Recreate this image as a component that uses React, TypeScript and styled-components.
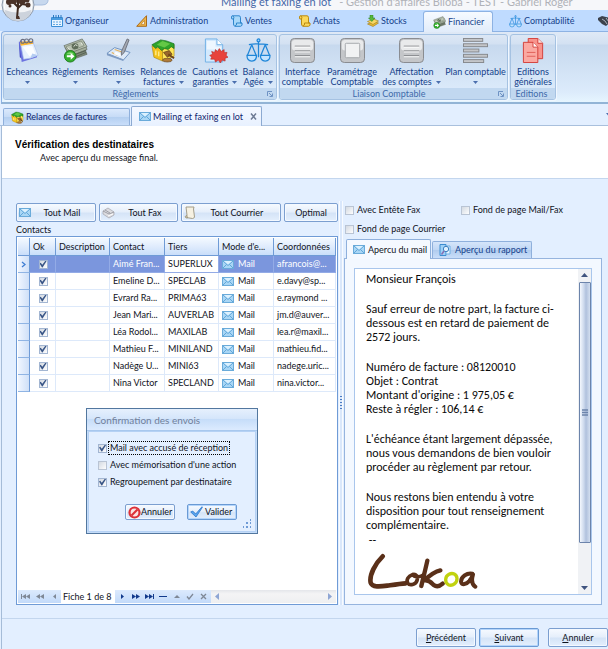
import React, { useState } from 'react';
import styled, { createGlobalStyle, css } from 'styled-components';

const ui = "Lato, 'Noto Sans', sans-serif";
const ink = '#10131c';
const navy = '#15428b';
const sky = '#e3efff';
const edge = '#7c9fd0';

const Global = createGlobalStyle`
  *, *::before, *::after { box-sizing: border-box; }
  body { margin: 0; background: ${sky}; font: 9px/12px ${ui}; color: ${ink}; }
  button, input { font: inherit; color: inherit; margin: 0; padding: 0; }
  svg { display: block; flex: none; }
`;

const Page = styled.div`
  display: flex;
  flex-direction: column;
  min-height: 100vh;
  overflow: hidden;
`;

/* ---------- Window title and module tabs ---------- */

const TitleBar = styled.header`
  position: relative;
  display: flex;
  align-items: flex-end;
  gap: 8px;
  height: 10px;
  padding: 0 0 1px 221px;
  background: #f6f7fa;
  font-size: 11px;
  line-height: 14px;
  color: #b0b2b8;
  white-space: nowrap;
  b { font-weight: 400; color: #4668a8; }
`;
const Orb = styled.button`
  position: absolute;
  left: 0;
  top: -12px;
  z-index: 2;
  border: 0;
  background: none;
`;
const ModuleTabs = styled.nav`
  display: flex;
  align-items: stretch;
  height: 21px;
  padding-left: 51px;
  background: #bfdbff;
`;
const ModuleTab = styled.button<{ $w: number; $on?: boolean; $pad?: number }>`
  display: flex;
  align-items: center;
  gap: 2px;
  flex: none;
  width: ${p => p.$w}px;
  padding: 1px 0 0 ${p => p.$pad ?? 0}px;
  border: 0;
  background: none;
  color: ${navy};
  ${p => p.$on && css`
    margin: 1px 0 -1px;
    padding-top: 0;
    border: 1px solid #8db2e3;
    border-bottom: 0;
    border-radius: 3px 3px 0 0;
    background: linear-gradient(#f6faff, #e1ecfa);
    z-index: 1;
  `}
`;

/* ---------- Ribbon ---------- */

const Ribbon = styled.section`
  display: flex;
  gap: 2px;
  height: 73px;
  margin-left: 1px;
  padding: 2px 1px;
  border: 1px solid #8db2e3;
  border-right: 0;
  border-bottom: 2px solid #92b4d6;
  border-radius: 4px 0 0 0;
  background: linear-gradient(#dfe9f6 0, #d3e1f2 12px, #c7d9ee 13px, #dcebfb 60px, #e6f5ff);
`;
const Group = styled.div`
  display: flex;
  flex-direction: column;
  border: 1px solid #a5c2e2;
  border-radius: 3px;
  overflow: hidden;
  box-shadow: 1px 1px 0 #f0f7ff;
`;
const Tools = styled.div`
  display: flex;
  flex: 1;
`;
const GroupCaption = styled.div`
  display: flex;
  align-items: center;
  height: 11px;
  padding: 1px 3px 0 0;
  background: #c1d8f0;
  color: #3e6aaa;
  line-height: 10px;
  span { flex: 1; text-align: center; }
`;
const Tool = styled.button<{ $w: number }>`
  display: flex;
  flex-direction: column;
  align-items: center;
  width: ${p => p.$w}px;
  padding: 2px 0 0;
  border: 0;
  background: none;
  color: ${navy};
  line-height: 10px;
  white-space: nowrap;
  svg.pic {
    width: 25px;
    height: 25px;
    margin: 1px 0 4px;
  }
`;
const ToolLine = styled.span`
  display: flex;
  align-items: center;
  justify-content: center;
  gap: 4px;
  min-height: 10px;
`;

/* ---------- Document tabs ---------- */

const DocTabs = styled.nav`
  display: flex;
  align-items: flex-end;
  gap: 1px;
  height: 22px;
  padding-left: 3px;
  border-bottom: 1px solid #a9c0dd;
`;
const DocTab = styled.div<{ $w: number; $on?: boolean }>`
  display: flex;
  align-items: center;
  width: ${p => p.$w}px;
  height: ${p => (p.$on ? 20 : 17)}px;
  margin-bottom: ${p => (p.$on ? -1 : 0)}px;
  padding: 0 4px 0 7px;
  border: 1px solid ${p => (p.$on ? '#8caad2' : '#8fb0dc')};
  border-bottom: 0;
  border-radius: 2px 2px 0 0;
  background: ${p => (p.$on ? 'linear-gradient(#f4f8ff, #e8f1ff)' : 'linear-gradient(#dbe9fc, #c6dbf6 50%, #b4cff0 51%, #c9defa)')};
  color: #10246e;
`;
const TabButton = styled.button`
  display: flex;
  align-items: center;
  flex: 1;
  gap: 2px;
  border: 0;
  background: none;
  white-space: nowrap;
`;
const PlainButton = styled.button`
  display: flex;
  border: 0;
  background: none;
`;
const MoreTabs = styled(PlainButton)`
  margin: 0 -3px 9px auto;
`;

/* ---------- Wizard page ---------- */

const Wizard = styled.main`
  display: flex;
  flex: 1;
  flex-direction: column;
  margin-left: 1px;
  border-left: 1px solid #a5bcd8;
`;
const Heading = styled.div`
  height: 53px;
  padding: 13px 13px 0;
  border-bottom: 1px solid #c3d6ee;
  background: #fff;
  h1 {
    margin: 0;
    font: bold 10px/12px 'Liberation Sans', sans-serif;
    color: #000;
  }
  p { margin: 1px 0 0 25px; }
`;
const Columns = styled.div`
  display: flex;
  flex: 1;
  padding: 22px 6px 13px 14px;
`;
const Left = styled.section`
  display: flex;
  flex-direction: column;
  flex: 322 1 0;
  min-width: 0;
  padding-top: 2px;
`;
const ButtonRow = styled.div`
  display: flex;
  gap: 3px;
`;
const Push = styled.button<{ $grow?: number; $w?: number; $h?: number; $hot?: boolean }>`
  display: flex;
  align-items: center;
  ${p => (p.$grow ? `flex: ${p.$grow} 1 0;` : `width: ${p.$w}px;`)}
  height: ${p => p.$h ?? 19}px;
  padding: 0 2px;
  border: 1px solid ${p => (p.$hot ? '#6a9ad4' : edge)};
  border-radius: 2px;
  background: linear-gradient(#f6faff, #e6effb 45%, #d5e4f7 55%, #e4effd);
  box-shadow: inset 0 0 0 1px ${p => (p.$hot ? '#b4d5fb' : '#f4f9ff')};
  white-space: nowrap;
  span { flex: 1; text-align: center; }
`;
const Caption = styled.div`
  height: 14px;
  line-height: 15px;
`;
const GridBox = styled.div`
  position: relative;
  display: flex;
  flex: 1;
  flex-direction: column;
  padding: 1px;
  border: 1px solid #6f9bd6;
  background: #fff;
`;
const Grid = styled.table`
  width: 100%;
  table-layout: fixed;
  border-collapse: separate;
  border-spacing: 0;
  th, td {
    height: 17px;
    padding: 0 2px 0 3px;
    font-weight: 400;
    text-align: left;
    white-space: nowrap;
    overflow: hidden;
    text-overflow: ellipsis;
  }
  thead th {
    height: 18px;
    border-right: 1px solid #6f9bd6;
    border-bottom: 1px solid #6f9bd6;
    background: linear-gradient(#f4f9ff, #dbe9fc 60%, #c9defa);
  }
  tbody th {
    padding: 0 2px;
    border-right: 1px solid #6f9bd6;
    border-bottom: 1px solid #8fb4e4;
    background: linear-gradient(90deg, #f0f6ff, #cfe0f8);
  }
  td {
    border-right: 1px solid #dde9fa;
    border-bottom: 1px solid #dde9fa;
  }
`;
const Row = styled.tr<{ $on: boolean }>`
  ${p => p.$on && css`
    td { background: #7b96dd; color: #fff; border-color: #93abe6; }
    td:nth-of-type(4) { background: #fff; color: ${ink}; }
  `}
`;
const Mode = styled.span`
  display: flex;
  align-items: center;
  gap: 4px;
`;
const Tick = styled.input`
  appearance: none;
  display: grid;
  place-items: center;
  flex: none;
  width: 9px;
  height: 9px;
  border: 1px solid #b9c4d4;
  background: linear-gradient(135deg, #d4dae2, #fdfdfe);
  &:checked { border-color: #a3b6d2; }
  &:checked::before {
    content: '';
    width: 7px;
    height: 7px;
    background: #3a5687;
    clip-path: polygon(0 42%, 18% 32%, 40% 60%, 86% 0, 100% 10%, 44% 100%, 36% 100%);
  }
`;
const CellTick = styled(Tick)`
  margin: 0 auto;
`;
const Choice = styled.label<{ $focus?: boolean }>`
  display: flex;
  align-items: center;
  gap: 2px;
  white-space: nowrap;
  span {
    padding: 0 1px;
    outline: ${p => (p.$focus ? '1px dotted #000' : 'none')};
  }
`;
const Navigator = styled.div`
  display: flex;
  align-items: stretch;
  height: 13px;
  margin-top: auto;
`;
const NavGroup = styled.div`
  display: flex;
  padding: 0 1px;
  background: linear-gradient(#dceafd, #c2dafa);
`;
const NavButton = styled.button<{ $w: number }>`
  display: flex;
  align-items: center;
  justify-content: center;
  width: ${p => p.$w}px;
  border: 0;
  background: none;
`;
const NavLabel = styled.span`
  padding: 0 2px;
  line-height: 14px;
  width: 54px;
  white-space: nowrap;
`;
const HScroll = styled.div`
  display: flex;
  flex: 1;
  align-items: center;
  justify-content: space-between;
  padding: 0 4px;
  background: linear-gradient(#e4e6ea, #f4f4f5 30%, #eeeff1);
`;

/* ---------- Confirmation dialog, floating over the grid ---------- */

const Dialog = styled.section`
  position: absolute;
  left: 69px;
  top: 171px;
  width: 172px;
  border: 1px solid #52779f;
  background: #c4dcf9;
  h2 {
    margin: 0;
    padding-left: 7px;
    height: 22px;
    font: 10px/23px ${ui};
    color: #71809a;
    background: linear-gradient(#e6f0fd, #d5e6fb 45%, #c6ddf9 50%, #dcebfe);
    border-bottom: 1px solid #a8c8ee;
  }
`;
const DialogBody = styled.div`
  display: flex;
  flex-direction: column;
  gap: 5px;
  margin: 0 1px 1px;
  padding: 10px 3px 3px 9px;
  border: 1px solid #b5d1f4;
  background: ${sky};
`;
const DialogActions = styled.div`
  display: flex;
  align-items: flex-start;
  gap: 12px;
  margin-top: 11px;
  padding-left: 27px;
  height: 24px;
  > svg { align-self: flex-end; margin-left: -6px; }
`;

/* ---------- Splitter and preview ---------- */

const Splitter = styled.div`
  display: flex;
  align-items: center;
  justify-content: center;
  width: 4px;
  margin: 0 1px;
  border-left: 1px solid #f8fbff;
  border-right: 1px solid #f8fbff;
  background: #d9e7fb;
`;
const Right = styled.section`
  display: flex;
  flex-direction: column;
  flex: 258 1 0;
  min-width: 0;
`;
const Options = styled.div`
  display: grid;
  grid-template-columns: 116px 1fr;
  row-gap: 7px;
  padding: 3px 0 3px 1px;
`;
const PreviewTabs = styled.div`
  display: flex;
  align-items: flex-end;
  gap: 1px;
  height: 20px;
  padding-left: 2px;
`;
const PreviewTab = styled.button<{ $on?: boolean; $w: number }>`
  display: flex;
  align-items: center;
  gap: 3px;
  width: ${p => p.$w}px;
  height: ${p => (p.$on ? 20 : 17)}px;
  margin-bottom: ${p => (p.$on ? -1 : 0)}px;
  padding: 0 6px;
  border: 1px solid #8fb0dc;
  border-bottom: 0;
  border-radius: 2px 2px 0 0;
  background: ${p => (p.$on ? '#f5f9ff' : 'linear-gradient(#d5e5fa, #bfd6f4 50%, #b1ccee 51%, #c9defa)')};
  color: ${p => (p.$on ? ink : navy)};
  white-space: nowrap;
  z-index: ${p => (p.$on ? 1 : 0)};
`;
const Preview = styled.div`
  display: flex;
  flex: 1;
  padding: 9px;
  border: 1px solid #96b4de;
  background: #f3f8ff;
`;
const Letter = styled.article`
  display: flex;
  flex: 1;
  min-width: 0;
  border: 1px solid #a9c6ec;
  background: #fff;
`;
const LetterText = styled.div`
  flex: 1;
  padding: 3px 0 0 11px;
  font: 12px/14px Carlito, Calibri, Lato, sans-serif;
  color: #0a0a0a;
  white-space: nowrap;
  p { margin: 0 0 16px; }
  p:last-of-type { margin-bottom: 1px; }
  svg { margin: 5px 0 0 2px; }
`;
const VScroll = styled.div`
  display: flex;
  flex-direction: column;
  align-items: center;
  width: 13px;
  background: #f0f2f5;
`;
const ScrollButton = styled.button`
  display: flex;
  align-items: center;
  justify-content: center;
  width: 13px;
  height: 13px;
  border: 0;
  background: none;
`;
const Thumb = styled.div`
  display: flex;
  align-items: center;
  justify-content: center;
  width: 12px;
  flex: 1;
  margin-bottom: 38px;
  border: 1px solid #6c84ab;
  border-radius: 1px;
  background: linear-gradient(90deg, #f4f8fe, #cbd8ec 40%, #b0c1dd 60%, #d3dff0);
`;
const Footer = styled.footer`
  display: flex;
  justify-content: flex-end;
  gap: 3px;
  padding: 9px 0 2px;
  border-top: 1px solid #c3d6ee;
  ${Push}:last-child { margin-left: 6px; }
`;

/* ---------- Icons ---------- */

const Down = () => (
  <svg width="5" height="3" viewBox="0 0 5 3"><path d="M0 0h5L2.500 3z" fill="#4b6fae" /></svg>
);
const Envelope = () => (
  <svg width="12" height="9" viewBox="0 0 12 9">
    <rect x=".5" y=".5" width="11" height="8" fill="#a9d6f5" stroke="#6aabda" />
    <path d="M1 1l5 4.500L11 1M1 8l3.500-3.500M11 8L7.500 4.500" fill="none" stroke="#4f9bd2" strokeWidth=".8" />
    <path d="M2 1h8L6 4.500z" fill="#dcf1fe" />
  </svg>
);
const TreeOrb = () => (
  <svg width="50" height="36" viewBox="0 0 50 36">
    <path d="M28 17h14q7 0 6-7V0H28z" fill="#c7d8ee" stroke="#a8bfdf" />
    <circle cx="18" cy="17" r="16" fill="#dfe3e8" stroke="#8e9aab" />
    <circle cx="18" cy="17" r="14" fill="#f3f4f6" stroke="#fff" />
    <path d="M5 22a13 11 0 0 0 26 0q-13 5-26 0" fill="#cdd3dc" />
    <path d="M17 30l1-11-4-4-6-1M18 20l4-4 6 1M18 21v-9" fill="none" stroke="#3f2a20" strokeWidth="2" />
    <g fill="#4a3228"><circle cx="9" cy="14" r="3" /><circle cx="14" cy="13" r="3" /><circle cx="22" cy="13" r="3.500" /><circle cx="28" cy="17" r="2.500" /><circle cx="27" cy="12" r="2.500" /><circle cx="10" cy="18" r="1.500" /><path d="M16 31l1-3h2l1 3z" /></g>
  </svg>
);
const Calendar = () => (
  <svg width="12" height="12" viewBox="0 0 12 12">
    <path d="M.5 2.500h11v9H.5z" fill="#e8f4ff" stroke="#3c8fd6" />
    <path d="M1 3h10v2H1z" fill="#4a9ce0" />
    <path d="M2.500 0v3M5 0v3M7.500 0v3M10 0v3" stroke="#2a78c0" />
    <path d="M2 7h8M2 9.500h8" stroke="#62a8e4" strokeDasharray="2 1" />
  </svg>
);
const SetSquare = () => (
  <svg width="12" height="12" viewBox="0 0 12 12">
    <path d="M.7 11.300L10.500.7v10.600z" fill="#efb544" stroke="#a8691b" />
    <path d="M5 9.300l3.500-3.800v3.800z" fill="#fff" stroke="#b87a24" strokeWidth=".7" />
  </svg>
);
const Scroll = ({ a, b }: { a: string; b: string }) => (
  <svg width="12" height="12" viewBox="0 0 12 12">
    <path d="M1 .8h7q1.500 0 1.500 2V8H11q.8 3-1.500 3.300H4Q2.500 11 2.500 9V4H.8Q0 1.500 1 .8z" fill={a} stroke={b} />
    <path d="M4 11q2-.5 1.500-3H11M2.500 4q1-2-.5-3" fill="none" stroke={b} />
  </svg>
);
const Layers = () => (
  <svg width="12" height="12" viewBox="0 0 12 12">
    <path d="M.5 9l6-2.500L11.500 8l-5.500 3.500z" fill="#e9b932" stroke="#a07b14" strokeWidth=".6" />
    <path d="M.5 6.500l6-2.500 5 2L6 9.500z" fill="#f6d765" stroke="#a07b14" strokeWidth=".6" />
    <path d="M3 0h3v3h2L4.800 6.500 1.500 3H3z" fill="#55b83c" stroke="#2a7d1d" strokeWidth=".5" />
  </svg>
);
const Cash = ({ size }: { size: number }) => (
  <svg className="pic" width={size} height={size} viewBox="0 0 26 26">
    <g stroke="#5c6659" strokeWidth=".7">
      <path d="M4 14l18-4 3 7-17 6z" fill="#7b8776" />
      <path d="M2 10l20-6 3 8-18 7z" fill="#a3ae9c" />
      <path d="M1 8L20 1l5 8-19 7z" fill="#b9c2b2" />
    </g>
    <path d="M3 9l16-6 3 5-15 6z" fill="none" stroke="#7c8876" strokeWidth=".8" />
    <ellipse cx="12.500" cy="8.500" rx="3.500" ry="3" fill="#5f6d5a" />
    <path d="M11 9l2-2 2 1M5 10l2 2M19 5l1 2" fill="none" stroke="#e9eee5" />
    <path d="M10 18l14-5M12 20l12-5" stroke="#4d574a" strokeWidth=".8" />
    <circle cx="7.500" cy="19" r="6" fill="#35b02f" stroke="#1c7c1a" />
    <path d="M3.500 17a4.500 4 0 0 1 8 0z" fill="#84d873" />
    <path d="M4 18h4v-2.500l4 3.500-4 3.500V20H4z" fill="#fff" />
  </svg>
);
const Scales = ({ size }: { size: number }) => (
  <svg className="pic" width={size} height={size} viewBox="0 0 26 26" fill="none" stroke="#1f86d8" strokeWidth="1.300">
    <circle cx="13" cy="2.500" r="1.500" fill="#9fd2ff" />
    <path d="M13 4v16M3 7q10-2 20 0M6 7L1.500 18M6 7l4.500 11M20 7l-4.500 11M20 7l4.500 11" />
    <path d="M1 18h10q0 6-5 6t-5-6zM15 18h10q0 6-5 6t-5-6z" fill="#c4e4ff" />
  </svg>
);
const Handshake = () => (
  <svg width="14" height="10" viewBox="0 0 14 10"><path d="M0 2l4-2 4 1 5 1 1 3-6 5-4-2-4-4z" fill="#3c424c" /><path d="M4 3l3 2 2 3M8 2l3 4" stroke="#aab2bd" fill="none" /></svg>
);
const NotePad = () => (
  <svg className="pic" width="26" height="26" viewBox="0 0 26 26">
    <path d="M4 5l3-3 2 21-4-3z" fill="#4a50c8" />
    <path d="M4 4h15l4 16-16 5z" fill="#6c73e0" />
    <path d="M6 7l13-2 5 13-8 3-7 1z" fill="#e6f0fd" stroke="#a9bfe8" strokeWidth=".7" />
    <path d="M8 9l10-1 3 8-6 3z" fill="#fbfdff" />
    <path d="M5 4l13-1 1 3-13 2z" fill="#ffb62e" />
    <path d="M16 21l2-5 6 2z" fill="#b5cdf2" />
    <g fill="none" stroke="#6a6f80" strokeWidth="1.200"><circle cx="8" cy="3.500" r="2" /><circle cx="12" cy="3" r="2" /><circle cx="16.500" cy="2.800" r="2" /></g>
  </svg>
);
const Cheque = () => (
  <svg className="pic" width="26" height="26" viewBox="0 0 26 26">
    <path d="M1 16l8-6 16 5-7 8z" fill="#dde9f7" stroke="#6f93bf" />
    <path d="M1 16l17 6v2L1 18z" fill="#7f9cc4" />
    <path d="M6 15l6 3M9 12l9 3" stroke="#e8b35a" strokeWidth="1.200" />
    <path d="M10 14l7 3-2 2-7-2z" fill="#f9fcff" />
    <path d="M22 1l2 1-5 13-3 3v-4z" fill="#a4a9b2" stroke="#5b616c" strokeWidth=".8" />
  </svg>
);
const Bills = ({ size }: { size: number }) => (
  <svg className="pic" width={size} height={size} viewBox="0 0 26 26">
    <path d="M1 8l11 4v12L3 20z" fill="#f2c21c" stroke="#a57e0b" strokeWidth=".6" />
    <path d="M12 12l12-5v12l-12 5z" fill="#ffe658" stroke="#a57e0b" strokeWidth=".6" />
    <path d="M1 7l9-5 6 1 8 3v5l-3-2-3 3-4-1-3 2-4-4-2 2z" fill="#2fa32a" stroke="#17701a" strokeWidth=".7" />
    <path d="M6 7l6-4 8 3-6 4z" fill="#63c846" />
    <path d="M5 13v5M8 14v5" stroke="#ffe987" strokeWidth="1.500" />
    <path d="M13 15l6-2 3 4-5 3z" fill="#9a672c" stroke="#5b3a13" strokeWidth=".7" />
    <path d="M18 17l6 4" stroke="#6f4519" strokeWidth="2" />
    <ellipse cx="17" cy="23" rx="5" ry="2" fill="#b07c3a" stroke="#5b3a13" strokeWidth=".6" />
  </svg>
);
const SealedPage = () => (
  <svg className="pic" width="26" height="26" viewBox="0 0 26 26">
    <path d="M2.500 1h12l6 6v18h-18z" fill="#d3e9fd" stroke="#6fb0e6" />
    <path d="M4 3h9v6h6v3H4z" fill="#eef7ff" />
    <path d="M14.500 1v6h6" fill="#fff" stroke="#6fb0e6" />
    <path d="M7 18l3-1-1-3 3 1 1-3 2 2 2-3 2 3 3-2v3l3 0-1 3 2 2-3 1 0 3-3-1-2 3-2-3-3 2-1-3-4 0 1-2z" fill="#e8423c" stroke="#b92522" strokeWidth=".6" />
  </svg>
);
const metal = { fill: '#c4c6c9', stroke: '#86888c' };
const Slab = ({ framed }: { framed?: boolean }) => (
  <svg className="pic" width="26" height="26" viewBox="0 0 26 26">
    <rect x=".5" y=".5" width="25" height="25" rx="4" {...metal} />
    <rect x="2" y="2" width="22" height="11" rx="3" fill="#e9eaeb" />
    {framed
      ? <rect x="5.500" y="5.500" width="15" height="15" rx="1" fill="#f1f2f3" stroke="#a6a8ac" />
      : <path d="M5 8.500h16M5 13.500h16M5 18.500h16" stroke="#77797d" />}
    {!framed && <path d="M5 9.500h16M5 14.500h16M5 19.500h16" stroke="#fff" />}
  </svg>
);
const Bars = () => (
  <svg className="pic" width="26" height="26" viewBox="0 0 26 26">
    <g {...metal}>
      <rect x=".5" y=".5" width="20" height="3" /><rect x=".5" y="6" width="25" height="3" /><rect x=".5" y="11.500" width="16" height="3" /><rect x=".5" y="17" width="25" height="3" /><rect x=".5" y="22.500" width="21" height="3" />
    </g>
  </svg>
);
const RedPages = () => (
  <svg className="pic" width="26" height="26" viewBox="0 0 26 26">
    <path d="M7.500.5h10l5 5v16h-15z" fill="#f9938c" stroke="#d33f3a" />
    <path d="M17.500.5v5h5" fill="#fde0dd" stroke="#d33f3a" />
    <path d="M2.500 4.500h10l5 5v16h-15z" fill="#fba9a2" stroke="#d33f3a" />
    <path d="M12.500 4.500v5h5" fill="#fff" stroke="#d33f3a" />
    <path d="M6 15h9M6 19h9" stroke="#e0605a" />
  </svg>
);
const Launcher = () => (
  <svg width="6" height="6" viewBox="0 0 6 6" fill="none" stroke="#6f93c4"><path d="M.5 5V.5H5M2 2l3 3M5.500 2.500v3h-3" /></svg>
);
const Close = () => (
  <svg width="7" height="7" viewBox="0 0 7 7"><path d="M1 .5l5 6M6 .5l-5 6" stroke="#6f7c95" strokeWidth="1.500" /></svg>
);
const FaxPhone = () => (
  <svg width="13" height="12" viewBox="0 0 13 12">
    <path d="M1 4l5-3 6 4v3l-5 3-6-4z" fill="#dcdce0" stroke="#a3a3aa" strokeWidth=".7" />
    <path d="M1 4l6 3 5-2M3 3l5 3" fill="none" stroke="#8f8f97" strokeWidth=".8" />
    <path d="M6 9l5-2" stroke="#fff" />
  </svg>
);
const Parchment = () => (
  <svg width="12" height="13" viewBox="0 0 12 13">
    <path d="M2 1h8l-.5 2 1 8q-.5 1.500-2 1.500L2 11.500 3 9z" fill="#f6f1e2" stroke="#9b947f" strokeWidth=".9" />
    <path d="M1 10.500l2-1 .5 2.500H2z" fill="#cfc5a6" stroke="#8f876f" strokeWidth=".6" />
  </svg>
);
const Report = () => (
  <svg width="13" height="12" viewBox="0 0 13 12">
    <path d="M1 .5h6v11H1z" fill="#9fd1f7" stroke="#3c8cd0" />
    <path d="M7 2h4v8H7z" fill="#e8f4ff" stroke="#6fb0e4" />
    <circle cx="7" cy="5" r="2.700" fill="#dff0ff" stroke="#3c7fc0" />
    <path d="M5 7l-2.500 3.500" stroke="#8a6fb4" strokeWidth="1.500" />
  </svg>
);
const Forbid = () => (
  <svg width="13" height="13" viewBox="0 0 13 13"><circle cx="6.500" cy="6.500" r="5" fill="#fbe3e3" stroke="#dc3038" strokeWidth="2.200" /><path d="M3.500 9.500l6-6" stroke="#dc3038" strokeWidth="2.200" /></svg>
);
const Check = () => (
  <svg width="13" height="12" viewBox="0 0 13 12"><path d="M.7 6l2-1 3 3L12 .7l.5.5L6 11z" fill="#5aa6ee" stroke="#1f6cc4" strokeWidth=".7" /></svg>
);
const Grip = () => (
  <svg width="9" height="9" viewBox="0 0 9 9" fill="#6f9bd6"><path d="M7 0h1v2H7zM7 3h1v2H7zM7 7h1v2H7zM3 3h2v2H3zM3 7h2v2H3zM0 7h1v2H0z" /></svg>
);
const Dots = () => (
  <svg width="2" height="15" viewBox="0 0 2 15"><path d="M1 0v15" stroke="#4b7cc4" strokeWidth="2" strokeDasharray="1 2" /></svg>
);
const Glyph = ({ d, c, w = 9, line }: { d: string; c: string; w?: number; line?: boolean }) => (
  <svg width={w} height="7" viewBox={`0 0 ${w} 7`}><path d={d} fill={line ? 'none' : c} stroke={line ? c : 'none'} strokeWidth={line ? 1.3 : 0} /></svg>
);
const LokoaLogo = () => (
  <svg width="110" height="38" viewBox="85 363 330 114" fill="none" stroke="#5a3019" strokeWidth="13" strokeLinecap="round" strokeLinejoin="round" role="img" aria-label="Lokoa">
    <path d="M129 376C108 396 88 432 93 455c4 15 30 12 50 9 20-3 38-6 55-7" strokeWidth="14" />
    <path d="M218 431c-12 4-19 16-14 25 6 9 24 5 28-7 4-13-3-21-14-18 8 8 22 8 33 1" strokeWidth="11" />
    <path d="M263 389c-5 24-13 54-18 76M302 418c-18 4-33 16-48 30 14-2 20 6 28 14 8 6 18 4 27-4" />
    <path d="M328 430c-12 6-14 24-2 31 13 6 27-6 26-19-1-12-13-18-24-12z" stroke="#c1d20f" strokeWidth="10" />
    <path d="M398 428c-16-4-34 10-34 24 1 12 17 8 25-2 5-7 9-14 11-20-4 14-5 30 7 37" strokeWidth="12" />
  </svg>
);

/* ---------- Data ---------- */

type ToolSpec = { w: number; pic: React.ReactNode; lines: [string, string]; menu?: boolean };

const reglements: ToolSpec[] = [
  { w: 46, pic: <NotePad />, lines: ['Echeances', ''], menu: true },
  { w: 50, pic: <Cash size={26} />, lines: ['Règlements', ''], menu: true },
  { w: 37, pic: <Cheque />, lines: ['Remises', ''], menu: true },
  { w: 53, pic: <Bills size={26} />, lines: ['Relances de', 'factures'], menu: true },
  { w: 50, pic: <SealedPage />, lines: ['Cautions et', 'garanties'], menu: true },
  { w: 36, pic: <Scales size={26} />, lines: ['Balance', 'Agée'], menu: true },
];
const liaison: ToolSpec[] = [
  { w: 45, pic: <Slab />, lines: ['Interface', 'comptable'] },
  { w: 54, pic: <Slab framed />, lines: ['Paramétrage', 'Comptable'] },
  { w: 65, pic: <Slab />, lines: ['Affectation', 'des comptes'], menu: true },
  { w: 63, pic: <Bars />, lines: ['Plan comptable', ''], menu: true },
];
const editions: ToolSpec[] = [{ w: 44, pic: <RedPages />, lines: ['Editions', 'générales'] }];

const contacts = [
  ['Aimé Fran...', 'SUPERLUX', 'afrancois@...'],
  ['Emeline D...', 'SPECLAB', 'e.davy@sp...'],
  ['Evrard Ra...', 'PRIMA63', 'e.raymond ...'],
  ['Jean Mari...', 'AUVERLAB', 'jm.d@auver...'],
  ['Léa Rodol...', 'MAXILAB', 'lea.r@maxil...'],
  ['Mathieu F...', 'MINILAND', 'mathieu.fid...'],
  ['Nadège U...', 'MINI63', 'nadege.uric...'],
  ['Nina Victor', 'SPECLAND', 'nina.victor...'],
];

const RibbonGroup = ({ title, tools, launcher }: { title: string; tools: ToolSpec[]; launcher?: boolean }) => (
  <Group>
    <Tools>
      {tools.map(t => (
        <Tool key={t.lines.join()} $w={t.w}>
          {t.pic}
          <ToolLine>{t.lines[0]}</ToolLine>
          <ToolLine>{t.lines[1]}{t.menu && <Down />}</ToolLine>
        </Tool>
      ))}
    </Tools>
    <GroupCaption><span>{title}</span>{launcher && <Launcher />}</GroupCaption>
  </Group>
);

const Option = ({ label, checked = false, focus }: { label: string; checked?: boolean; focus?: boolean }) => {
  const [on, setOn] = useState(checked);
  return (
    <Choice $focus={focus}>
      <Tick type="checkbox" checked={on} onChange={e => setOn(e.target.checked)} />
      <span>{label}</span>
    </Choice>
  );
};

const gray = '#7f8896';
const blue = '#123a8c';

export default function App() {
  return (
    <>
      <Global />
      <Page>
        <TitleBar>
          <Orb aria-label="Menu"><TreeOrb /></Orb>
          <b>Mailing et faxing en lot</b>
          <span>- Gestion d'affaires Biloba - TEST - Gabriel Roger</span>
        </TitleBar>
        <ModuleTabs>
          <ModuleTab $w={85}><Calendar />Organiseur</ModuleTab>
          <ModuleTab $w={95}><SetSquare />Administration</ModuleTab>
          <ModuleTab $w={68}><Scroll a="#a8d8fa" b="#2f86cc" />Ventes</ModuleTab>
          <ModuleTab $w={68}><Scroll a="#fbd85a" b="#b98a12" />Achats</ModuleTab>
          <ModuleTab $w={56}><Layers />Stocks</ModuleTab>
          <ModuleTab $w={70} $pad={9} $on><Cash size={13} />Financier</ModuleTab>
          <ModuleTab $w={105} $pad={16}><Scales size={13} />Comptabilité</ModuleTab>
          <ModuleTab $w={14} aria-label="Relations"><Handshake /></ModuleTab>
        </ModuleTabs>
        <Ribbon>
          <RibbonGroup title="Règlements" tools={reglements} launcher />
          <RibbonGroup title="Liaison Comptable" tools={liaison} launcher />
          <RibbonGroup title="Editions" tools={editions} />
        </Ribbon>
        <DocTabs>
          <DocTab $w={127}><TabButton><Bills size={13} />Relances de factures</TabButton></DocTab>
          <DocTab $w={131} $on>
            <TabButton><Envelope />Mailing et faxing en lot</TabButton>
            <PlainButton aria-label="Fermer"><Close /></PlainButton>
          </DocTab>
          <MoreTabs aria-label="Onglets"><Down /></MoreTabs>
        </DocTabs>
        <Wizard>
          <Heading>
            <h1>Vérification des destinataires</h1>
            <p>Avec aperçu du message final.</p>
          </Heading>
          <Columns>
            <Left>
              <ButtonRow>
                <Push $grow={80}><Envelope /><span>Tout Mail</span></Push>
                <Push $grow={79}><FaxPhone /><span>Tout Fax</span></Push>
                <Push $grow={102}><Parchment /><span>Tout Courrier</span></Push>
                <Push $grow={52}><span>Optimal</span></Push>
              </ButtonRow>
              <Caption>Contacts</Caption>
              <GridBox>
                <Grid aria-label="Contacts">
                  <colgroup>
                    <col width="12" /><col width="26" /><col width="54" /><col width="55" /><col width="54" /><col width="55" /><col />
                  </colgroup>
                  <thead>
                    <tr>
                      <th /><th>Ok</th><th>Description</th><th>Contact</th><th>Tiers</th><th>Mode d'e...</th><th>Coordonnées</th>
                    </tr>
                  </thead>
                  <tbody>
                    {contacts.map(([name, firm, mail], i) => (
                      <Row key={name} $on={i === 0}>
                        <th scope="row">{i === 0 && <Glyph d="M2 1l3 2.500L2 6" c="#3f7fd4" w={7} line />}</th>
                        <td><CellTick type="checkbox" defaultChecked aria-label={name} /></td>
                        <td />
                        <td>{name}</td>
                        <td>{firm}</td>
                        <td><Mode><Envelope />Mail</Mode></td>
                        <td>{mail}</td>
                      </Row>
                    ))}
                  </tbody>
                </Grid>
                <Navigator>
                  <NavGroup>
                    <NavButton $w={13} aria-label="Premier"><Glyph d="M0 1h1v5H0zM5 1v5L1 3.500zM9 1v5L5 3.500z" c={gray} /></NavButton>
                    <NavButton $w={15} aria-label="Page précédente"><Glyph d="M4 1v5L0 3.500zM8 1v5L4 3.500z" c={gray} w={8} /></NavButton>
                    <NavButton $w={13} aria-label="Précédent"><Glyph d="M4 1v5L1 3.500z" c={gray} w={4} /></NavButton>
                  </NavGroup>
                  <NavLabel>Fiche 1 de 8</NavLabel>
                  <NavGroup>
                    <NavButton $w={13} aria-label="Suivant"><Glyph d="M0 1v5l3-2.500z" c={blue} w={4} /></NavButton>
                    <NavButton $w={14} aria-label="Page suivante"><Glyph d="M0 1v5l4-2.500zM4 1v5l4-2.500z" c={blue} w={8} /></NavButton>
                    <NavButton $w={13} aria-label="Dernier"><Glyph d="M0 1v5l4-2.500zM4 1v5l4-2.500zM8 1h1v5H8z" c={blue} /></NavButton>
                    <NavButton $w={14} aria-label="Supprimer"><Glyph d="M0 3h8v1H0z" c={blue} w={8} /></NavButton>
                    <NavButton $w={13} aria-label="Modifier"><Glyph d="M0 5h6L3 2z" c={gray} w={6} /></NavButton>
                    <NavButton $w={13} aria-label="Enregistrer"><Glyph d="M1 3.500L3 6l4-5" c={gray} w={8} line /></NavButton>
                    <NavButton $w={14} aria-label="Abandonner"><Glyph d="M1 1l5 5M6 1L1 6" c={gray} w={7} line /></NavButton>
                  </NavGroup>
                  <HScroll>
                    <PlainButton aria-label="Défiler à gauche"><Glyph d="M4 0v7L0 3.500z" c="#8fa6d4" w={4} /></PlainButton>
                    <PlainButton aria-label="Défiler à droite"><Glyph d="M0 0v7l4-3.500z" c="#8fa6d4" w={4} /></PlainButton>
                  </HScroll>
                </Navigator>
                <Dialog role="dialog" aria-labelledby="confirm-title">
                  <h2 id="confirm-title">Confirmation des envois</h2>
                  <DialogBody>
                    <Option label="Mail avec accusé de réception" checked focus />
                    <Option label="Avec mémorisation d'une action" />
                    <Option label="Regroupement par destinataire" checked />
                    <DialogActions>
                      <Push $w={51} $h={16}><Forbid /><span>Annuler</span></Push>
                      <Push $w={51} $h={16} $hot><Check /><span>Valider</span></Push>
                      <Grip />
                    </DialogActions>
                  </DialogBody>
                </Dialog>
              </GridBox>
            </Left>
            <Splitter><Dots /></Splitter>
            <Right>
              <Options>
                <Option label="Avec Entête Fax" />
                <Option label="Fond de page Mail/Fax" />
                <Option label="Fond de page Courrier" />
              </Options>
              <PreviewTabs role="tablist">
                <PreviewTab role="tab" aria-selected="true" $w={85} $on><Envelope />Apercu du mail</PreviewTab>
                <PreviewTab role="tab" aria-selected="false" $w={100}><Report />Aperçu du rapport</PreviewTab>
              </PreviewTabs>
              <Preview>
                <Letter>
                  <LetterText>
                    <p>Monsieur François</p>
                    <p>Sauf erreur de notre part, la facture ci-<br />dessous est en retard de paiement de<br />2572 jours.</p>
                    <p>Numéro de facture : 08120010<br />Objet : Contrat<br />Montant d'origine : 1 975,05 €<br />Reste à régler : 106,14 €</p>
                    <p>L'échéance étant largement dépassée,<br />nous vous demandons de bien vouloir<br />procéder au règlement par retour.</p>
                    <p>Nous restons bien entendu à votre<br />disposition pour tout renseignement<br />complémentaire.</p>
                    &nbsp;--
                    <LokoaLogo />
                  </LetterText>
                  <VScroll>
                    <ScrollButton aria-label="Défiler vers le haut"><Glyph d="M0 5h7L3.500 1z" c="#3f547f" w={7} /></ScrollButton>
                    <Thumb><Glyph d="M0 1h6M0 3.500h6M0 6h6" c="#6c84ab" w={6} line /></Thumb>
                    <ScrollButton aria-label="Défiler vers le bas"><Glyph d="M0 2h7L3.500 6z" c="#3f547f" w={7} /></ScrollButton>
                  </VScroll>
                </Letter>
              </Preview>
            </Right>
          </Columns>
          <Footer>
            <Push $w={60}><span><u>P</u>récédent</span></Push>
            <Push $w={60} $hot><span><u>S</u>uivant</span></Push>
            <Push $w={60}><span><u>A</u>nnuler</span></Push>
          </Footer>
        </Wizard>
      </Page>
    </>
  );
}
